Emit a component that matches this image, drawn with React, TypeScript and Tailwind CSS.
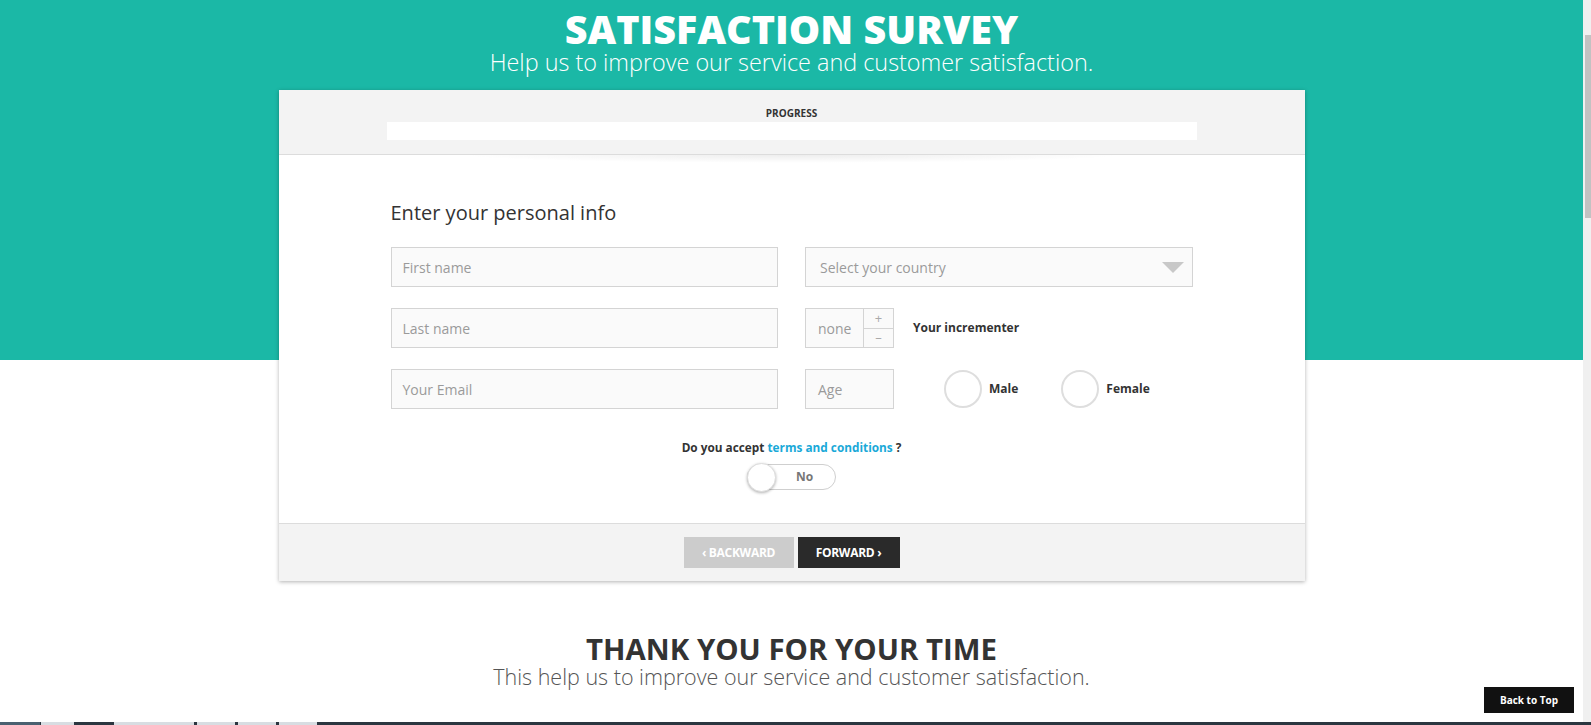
import React from "react";

const font = { fontFamily: '"Open Sans", "Liberation Sans", sans-serif' };

function TextInput({ placeholder }: { placeholder: string }) {
  return (
    <div className="h-[40px] border border-[#d4d4d4] bg-[#fafafa] flex items-center px-[11px] text-[14px] text-[#9a9a9a]">
      {placeholder}
    </div>
  );
}

function Radio({ label }: { label: string }) {
  return (
    <div className="flex items-center gap-[7px]">
      <div className="w-[38px] h-[38px] rounded-full border-2 border-[#dedede] bg-white" />
      <span className="text-[12px] font-bold text-[#333]">{label}</span>
    </div>
  );
}

export default function App() {
  return (
    <div style={font} className="w-[1591px] h-[725px] overflow-hidden flex flex-col bg-white relative">
      <div className="flex flex-1 min-h-0">
        <main className="flex-1 min-w-0 bg-[linear-gradient(#1bb8a6_360px,#ffffff_360px)]">
          <header className="text-center text-white pt-[8px]">
            <h1 className="text-[39.5px] leading-[42px] font-extrabold">SATISFACTION SURVEY</h1>
            <p className="text-[23.4px] leading-[24px] font-light">
              Help us to improve our service and customer satisfaction.
            </p>
          </header>

          <div className="mx-auto w-[1026px] mt-[16px] bg-white shadow-[0_1px_4px_rgba(0,0,0,0.3)]">
            <div className="h-[65px] bg-[#f3f3f3] border-b border-[#dcdcdc] flex flex-col items-center pt-[16px]">
              <div className="text-[10px] font-bold text-[#333] leading-[14px]">PROGRESS</div>
              <div className="mt-[2px] w-[810px] h-[18px] bg-white" />
            </div>
            <div className="h-[8px] mx-[180px] bg-[radial-gradient(ellipse_at_top,rgba(0,0,0,0.07),transparent_70%)]" />

            <div className="px-[112px] pt-[36px] pb-[33px]">
              <h3 className="text-[20px] leading-[28px] text-[#333] mb-[20px]">Enter your personal info</h3>
              <div className="grid grid-cols-2 gap-x-[27px] gap-y-[21px]">
                <TextInput placeholder="First name" />
                <div className="h-[40px] border border-[#d4d4d4] bg-[#fafafa] flex items-center justify-between pl-[14px] pr-[8px] text-[14px] text-[#9a9a9a]">
                  <span>Select your country</span>
                  <svg width="22" height="11" viewBox="0 0 22 11">
                    <path d="M0 0 H22 L11 11 Z" fill="#c8c8c8" />
                  </svg>
                </div>

                <TextInput placeholder="Last name" />
                <div className="flex items-center">
                  <div className="h-[40px] w-[89px] border border-[#d4d4d4] bg-[#fafafa] flex">
                    <div className="flex-1 flex items-center pl-[12px] text-[14px] text-[#9a9a9a]">none</div>
                    <div className="w-[30px] border-l border-[#d4d4d4] flex flex-col">
                      <div className="flex-1 border-b border-[#d4d4d4] flex items-center justify-center text-[13px] text-[#aaa] leading-none">+</div>
                      <div className="flex-1 flex items-center justify-center text-[13px] text-[#aaa] leading-none">–</div>
                    </div>
                  </div>
                  <span className="ml-[19px] text-[12px] font-bold text-[#333]">Your incrementer</span>
                </div>

                <TextInput placeholder="Your Email" />
                <div className="flex items-center">
                  <div className="h-[40px] w-[89px] border border-[#d4d4d4] bg-[#fafafa] flex items-center pl-[12px] text-[14px] text-[#9a9a9a]">
                    Age
                  </div>
                  <div className="ml-[50px] flex items-center gap-[43px]">
                    <Radio label="Male" />
                    <Radio label="Female" />
                  </div>
                </div>
              </div>

              <div className="mt-[30px] flex flex-col items-center">
                <div className="text-[11.8px] leading-[16px] font-bold text-[#333]">
                  Do you accept <span className="text-[#1aa9d8]">terms and conditions</span> ?
                </div>
                <div className="mt-[9px] w-[89px] h-[26px] rounded-full border border-[#cfcfcf] bg-white relative flex items-center justify-center">
                  <div className="absolute -left-[1px] -top-[2px] w-[29px] h-[29px] rounded-full bg-white border border-[#ddd] shadow-[0_1px_3px_rgba(0,0,0,0.3)]" />
                  <span className="ml-[26px] text-[12px] font-bold text-[#777]">No</span>
                </div>
              </div>
            </div>

            <div className="h-[58px] bg-[#f3f3f3] border-t border-[#dcdcdc] flex items-center justify-center gap-[4px]">
              <button className="w-[110px] h-[31px] bg-[#cccccc] text-white text-[12px] font-bold tracking-[-0.3px]">‹ BACKWARD</button>
              <button className="w-[102px] h-[31px] bg-[#2a2a2a] text-white text-[12px] font-bold tracking-[-0.3px]">FORWARD ›</button>
            </div>
          </div>

          <section className="text-center mt-[52px]">
            <h2 className="text-[29.4px] leading-[32px] font-bold text-[#333]">THANK YOU FOR YOUR TIME</h2>
            <p className="text-[21.5px] leading-[24px] font-light text-[#555]">
              This help us to improve our service and customer satisfaction.
            </p>
          </section>
        </main>

        <div className="w-[8px] bg-[#f0f0f0] flex flex-col items-end">
          <div className="h-[35px]" />
          <div className="w-[6px] h-[183px] bg-[#c2c2c2]" />
        </div>
      </div>

      <div className="h-[3px] bg-[#2b3640] flex">
        <div className="w-[40px] bg-[#4a6070]" />
        <div className="w-[33px] ml-[1px] bg-[#d8dde2]" />
        <div className="w-[80px] ml-[40px] bg-[#d8dde2]" />
        <div className="w-[38px] ml-[3px] bg-[#d8dde2]" />
        <div className="w-[38px] ml-[3px] bg-[#d8dde2]" />
        <div className="w-[38px] ml-[3px] bg-[#d8dde2]" />
      </div>

      <button className="absolute right-[17px] bottom-[12px] w-[90px] h-[26px] bg-[#111] text-white text-[10px] font-bold">
        Back to Top
      </button>
    </div>
  );
}
